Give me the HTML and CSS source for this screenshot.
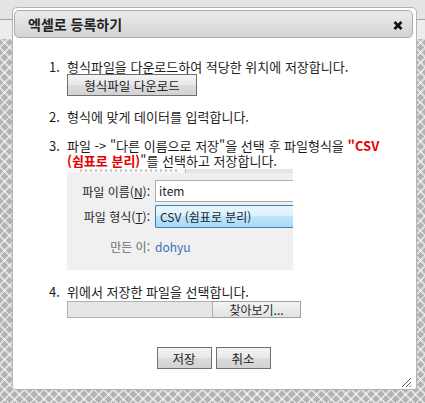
FILE: index.html
```html
<html lang="ko">
<head>
    <meta charset="UTF-8">
    <meta name="viewport" content="width=device-width, initial-scale=1.0">
    <title>엑셀로 등록하기</title>
    <link rel="stylesheet" href="styles.css">
</head>
<body>
    <div class="page">
        <div class="page-top"></div>
        <div class="page-pattern"></div>
    </div>

    <div class="dialog">
        <div class="dialog-title">
            <span>엑셀로 등록하기</span>
            <svg class="close" width="10" height="9" viewBox="0 0 10 9">
                <path d="M1.5 1 L8.5 8 M8.5 1 L1.5 8" stroke="#111" stroke-width="2.6"/>
            </svg>
        </div>

        <div class="dialog-body">
            <ol class="steps">
                <li>
                    <div>형식파일을 다운로드하여 적당한 위치에 저장합니다.</div>
                    <button class="btn btn-download">형식파일 다운로드</button>
                </li>
                <li>
                    <div>형식에 맞게 데이터를 입력합니다.</div>
                </li>
                <li>
                    <div>파일 -&gt; "다른 이름으로 저장"을 선택 후 파일형식을 <b class="red">"CSV<br>(쉼표로 분리)</b>"를 선택하고 저장합니다.</div>
                    <div class="shot">
                        <div class="shot-cut"></div>
                        <div class="shot-form">
                            <label>파일 이름(<u>N</u>):</label>
                            <div class="shot-input">item</div>
                            <label>파일 형식(<u>T</u>):</label>
                            <div class="shot-select">CSV (쉼표로 분리)</div>
                            <label class="muted">만든 이:</label>
                            <div class="shot-value">dohyu</div>
                        </div>
                    </div>
                </li>
                <li>
                    <div>위에서 저장한 파일을 선택합니다.</div>
                    <div class="file-input">
                        <span class="file-path"></span>
                        <span class="file-btn">찾아보기...</span>
                    </div>
                </li>
            </ol>

            <div class="actions">
                <button class="btn">저장</button>
                <button class="btn">취소</button>
            </div>

            <svg class="grip" width="12" height="12" viewBox="0 0 12 12">
                <path d="M11 2 L2 11 M11 6 L6 11 M11 9.5 L9.5 11" stroke="#555" stroke-width="1"/>
            </svg>
        </div>
    </div>
</body>
</html>
```

FILE: styles.css
```css
* {
    margin: 0;
    padding: 0;
    box-sizing: border-box;
}

body {
    width: 425px;
    height: 403px;
    overflow: hidden;
    font-family: 'Noto Sans CJK KR', 'Liberation Sans', sans-serif;
    font-size: 13px;
    color: #1e1e1e;
}

.page {
    display: flex;
    flex-direction: column;
    height: 403px;
}

.page-top {
    height: 39px;
    background: linear-gradient(#e4e4e4 0 19px, #a4a4a4 19px 20px, #ececec 20px);
}

.page-pattern {
    flex: 1;
    background-color: #b3b3b3;
    background-image:
        repeating-linear-gradient(45deg, transparent 0 5px, rgba(255, 255, 255, 0.55) 5px 7px),
        repeating-linear-gradient(-45deg, transparent 0 5px, rgba(255, 255, 255, 0.55) 5px 7px);
}

/* modal over the page */
.dialog {
    position: absolute;
    left: 12px;
    top: 7px;
    width: 405px;
    height: 383px;
    background: #fff;
    border: 1px solid #b4b4b4;
    border-radius: 5px 5px 3px 3px;
    padding: 2px 3px 0 1px;
    display: flex;
    flex-direction: column;
}

.dialog-title {
    height: 28px;
    border: 1px solid #aaa;
    border-radius: 5px;
    background: linear-gradient(#ececec, #d3d3d3);
    display: flex;
    align-items: center;
    justify-content: space-between;
    padding: 0 9px 0 13px;
    font-size: 14px;
    font-weight: bold;
    color: #222;
}

.close {
    margin-top: 2px;
}

.dialog-body {
    flex: 1;
    position: relative;
    padding: 21px 20px 0 35px;
}

.steps {
    list-style: none;
    counter-reset: step;
    line-height: 15px;
}

.steps li {
    counter-increment: step;
    display: grid;
    grid-template-columns: 18px 1fr;
    margin-bottom: 14px;
}

.steps li:first-child {
    margin-bottom: 13px;
}

.steps li::before {
    content: counter(step) ".";
    grid-row: 1 / span 3;
}

.red {
    color: #e60000;
}

.btn {
    font-family: 'Noto Sans CJK KR', sans-serif;
    font-size: 12.5px;
    color: #222;
    height: 22px;
    border: 1px solid #707070;
    background: linear-gradient(#f4f4f4, #e8e8e8 50%, #dcdcdc 50%, #d2d2d2);
}

.btn-download {
    width: 130px;
}

.shot {
    width: 226px;
    height: 102px;
    background: #f0f0f0;
    overflow: hidden;
    font-size: 12px;
    line-height: normal;
}

.shot-cut {
    height: 5px;
    border-top: 1px solid #fff;
    background:
        repeating-linear-gradient(90deg, transparent 0 3px, rgba(120, 120, 120, 0.35) 3px 5px) 10px 0 / 100px 3px no-repeat,
        linear-gradient(90deg, #f8f8f8 0 118px, #b9b9b9 118px 119px, #e6e6e6 119px);
}

.shot-form {
    display: grid;
    grid-template-columns: 83px 300px;
    column-gap: 5px;
    row-gap: 3px;
    padding-top: 7px;
    align-items: center;
}

.shot-form label {
    text-align: right;
    color: #1e1e1e;
}

.shot-form label.muted {
    color: #6d6d6d;
    padding-top: 7px;
}

.shot-input {
    height: 22px;
    background: #fff;
    border: 1px solid #abadb3;
    border-right: none;
    padding-left: 3px;
    line-height: 20px;
}

.shot-select {
    height: 23px;
    background: linear-gradient(#eaf6fd, #d9f0fc 50%, #bee6fd 50%, #a7d9f5);
    border: 1px solid #3c7fb1;
    border-right: none;
    border-radius: 2px 0 0 2px;
    padding-left: 4px;
    line-height: 21px;
}

.shot-value {
    color: #3a6fb8;
    padding-top: 7px;
}

.file-input {
    display: flex;
    margin-top: 2px;
    height: 17px;
    font-size: 12px;
}

.file-path {
    width: 146px;
    background: #e6e6e6;
    border: 1px solid #b0b0b0;
}

.file-path + .file-btn {
    width: 88px;
    background: linear-gradient(#f4f4f4, #e2e2e2);
    border: 1px solid #a0a0a0;
    border-left: none;
    text-align: center;
    line-height: 15px;
}

.actions {
    display: flex;
    justify-content: center;
    gap: 4px;
    margin-top: 29px;
    margin-left: -15px;
}

.actions .btn {
    width: 55px;
}

.grip {
    position: absolute;
    right: 1px;
    bottom: 1px;
}
```
